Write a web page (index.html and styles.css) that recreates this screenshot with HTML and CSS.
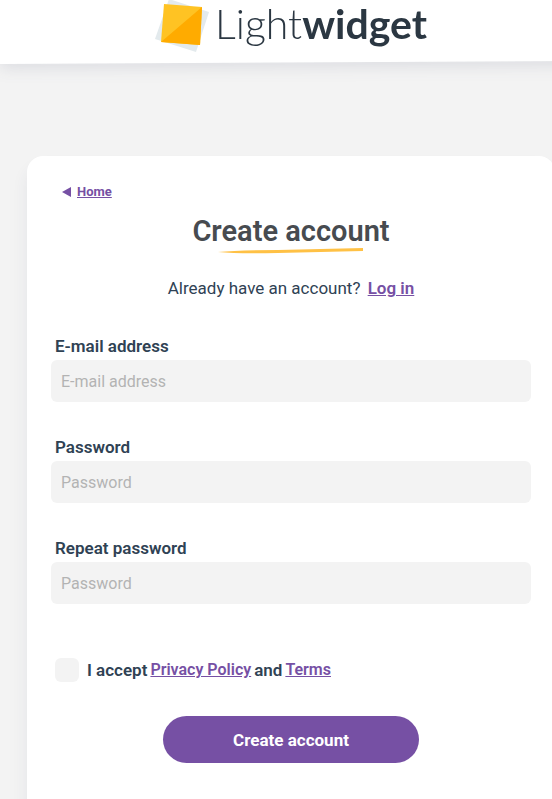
FILE: index.html
```html
<!DOCTYPE html>
<html lang="en">
<head>
  <meta charset="UTF-8" />
  <meta name="viewport" content="width=device-width, initial-scale=1.0" />
  <title>Create account - Lightwidget</title>
  <link rel="stylesheet" href="styles.css">
</head>
<body>
  <div class="page">
    <header class="header">
      <a class="logo" href="#">
        <svg class="logo-mark" width="54" height="52" viewBox="0 0 54 52" aria-hidden="true">
          <path fill="#e3eaed" d="M14 -1 L54 12 L41 52 L0 39 Z" />
          <path fill="#ffc323" d="M9 4 L47 7 L45 45 L6 42 Z" />
          <path fill="#ffab00" d="M47 7 L45 45 L6 42 Z" />
        </svg>
        <span class="logo-text">Light<b>widget</b></span>
      </a>
    </header>

    <main class="card">
      <nav class="back">
        <svg width="9" height="10" viewBox="0 0 9 10" aria-hidden="true">
          <path fill="#7650a4" d="M0 5 L9 0 V10 Z" />
        </svg>
        <a href="#">Home</a>
      </nav>

      <h1>Create account</h1>
      <svg class="underline" width="146" height="6" viewBox="0 0 146 6" aria-hidden="true">
        <path fill="#ffc145" d="M0 4 Q20 2 60 2 L145 0 V3 L60 5 Q20 6 0 4 Z" />
      </svg>

      <p class="login">Already have an account? <a href="#">Log in</a></p>

      <form>
        <div class="field">
          <label for="email">E-mail address</label>
          <input type="email" id="email" name="email" placeholder="E-mail address" />
        </div>
        <div class="field">
          <label for="password">Password</label>
          <input type="password" id="password" name="password" placeholder="Password" />
        </div>
        <div class="field">
          <label for="repeat">Repeat password</label>
          <input type="password" id="repeat" name="repeat" placeholder="Password" />
        </div>

        <div class="terms">
          <input type="checkbox" id="accept" name="accept" />
          <label for="accept">I accept <a href="#">Privacy Policy</a> and <a href="#">Terms</a></label>
        </div>

        <button type="submit">Create account</button>
      </form>
    </main>
  </div>
</body>
</html>
```
FILE: styles.css
```css
* {
  box-sizing: border-box;
}
html {
  overflow-x: hidden;
}
body {
  margin: 0;
  background-color: #f3f3f3;
  color: #2f4254;
  font-family: Roboto, "Liberation Sans", sans-serif;
  font-size: 17px;
  line-height: 20px;
  overflow: hidden;
}
a {
  color: #7650a4;
  font-weight: 600;
  text-decoration: underline;
}
.page {
  margin-right: -30px;
}

.header {
  position: relative;
  display: flex;
  justify-content: center;
  height: 64px;
  filter: drop-shadow(0 4px 8px rgba(50, 60, 100, 0.12));
}
.header::before {
  content: "";
  position: absolute;
  inset: 0;
  background-color: #fff;
  clip-path: polygon(0 0, 100% 0, 100% 61px, 0 100%);
}
.logo {
  position: relative;
  display: flex;
  height: 52px;
  gap: 6px;
  color: #2b3742;
  text-decoration: none;
}
.logo-text {
  font-family: Lato, sans-serif;
  font-size: 41px;
  font-weight: 300;
  line-height: 48px;
}
.logo-text b {
  font-weight: 700;
}

.card {
  margin: 92px 27px 0;
  padding: 26px 24px 60px;
  background-color: #fff;
  border-radius: 16px;
  box-shadow: 0 12px 16px rgba(50, 60, 100, 0.08);
}
.back {
  display: flex;
  align-items: center;
  gap: 6px;
  padding-left: 11px;
  font-size: 13px;
}
.back a {
  font-weight: 700;
}
h1 {
  margin: 12px 0 0;
  color: #474b50;
  font-size: 29px;
  font-weight: 600;
  line-height: 34px;
  text-align: center;
}
.underline {
  display: block;
  margin: 0 auto;
}
.login {
  margin: 24px 0 0;
  text-align: center;
}
.login a {
  margin-left: 3px;
}

form {
  margin-top: 38px;
}
.field {
  margin-bottom: 35px;
}
.field label {
  display: block;
  margin: 0 4px 4px;
  font-weight: 600;
}
.field input {
  display: block;
  width: 100%;
  height: 42px;
  padding: 0 10px;
  border: none;
  border-radius: 6px;
  background-color: #f3f3f3;
  color: #2f4254;
  font: inherit;
  font-size: 16px;
}
.field input::placeholder {
  color: #b3b3b3;
}
.terms {
  display: flex;
  align-items: center;
  gap: 8px;
  margin: 54px 4px 34px;
  font-weight: 600;
}
.terms label {
  display: flex;
  flex-wrap: wrap;
  column-gap: 3px;
}
.terms a {
  font-size: 16px;
}
.terms input {
  appearance: none;
  width: 24px;
  height: 24px;
  margin: 0;
  border-radius: 6px;
  background-color: #f3f3f3;
}
.terms input:checked {
  background-color: #7650a4;
}
button {
  display: block;
  width: 256px;
  height: 47px;
  margin: 0 auto;
  border: none;
  border-radius: 24px;
  background-color: #7650a4;
  color: #fff;
  font: inherit;
  font-weight: 700;
  cursor: pointer;
}
button:hover {
  background-color: #64428e;
}
```
